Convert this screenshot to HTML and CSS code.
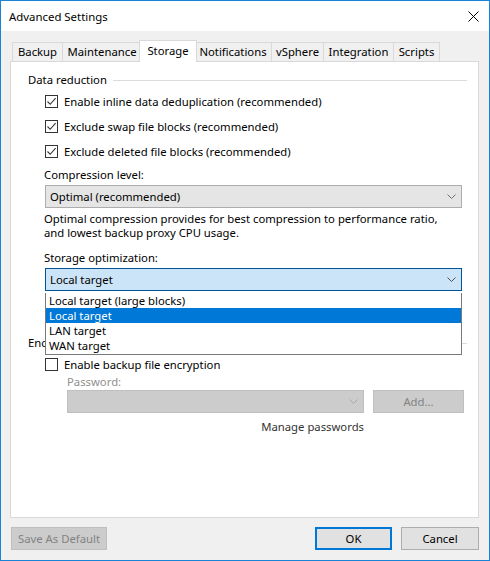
FILE: index.html
```html
<!DOCTYPE html>
<html>
<head>
<meta charset="utf-8">
<link rel="stylesheet" href="styles.css">
</head>
<body>
<div class="window">
  <div class="titlebar">
    <span class="title">Advanced Settings</span>
    <svg class="close" width="11" height="11" viewBox="0 0 11 11"><path d="M0.5 0.5L10.5 10.5M10.5 0.5L0.5 10.5" stroke="#000" stroke-width="1" fill="none"/></svg>
  </div>
  <div class="client">
    <div class="tabs">
      <div class="tab t-backup">Backup</div>
      <div class="tab t-maint">Maintenance</div>
      <div class="tab t-storage selected">Storage</div>
      <div class="tab t-notif">Notifications</div>
      <div class="tab t-vsphere">vSphere</div>
      <div class="tab t-integ">Integration</div>
      <div class="tab t-scripts">Scripts</div>
    </div>
    <div class="panel">
      <div class="group-head gh-data"><span>Data reduction</span><div class="rule"></div></div>
      <div class="checks">
        <div class="check"><span class="box"><svg width="11" height="11" viewBox="0 0 11 11"><path d="M1.5 5.5L4.2 8.3L9.6 2.2" stroke="#333" stroke-width="1.1" fill="none"/></svg></span>Enable inline data deduplication (recommended)</div>
        <div class="check"><span class="box"><svg width="11" height="11" viewBox="0 0 11 11"><path d="M1.5 5.5L4.2 8.3L9.6 2.2" stroke="#333" stroke-width="1.1" fill="none"/></svg></span>Exclude swap file blocks (recommended)</div>
        <div class="check"><span class="box"><svg width="11" height="11" viewBox="0 0 11 11"><path d="M1.5 5.5L4.2 8.3L9.6 2.2" stroke="#333" stroke-width="1.1" fill="none"/></svg></span>Exclude deleted file blocks (recommended)</div>
      </div>
      <div class="field-label fl-comp">Compression level:</div>
      <div class="combo">
        <span>Optimal (recommended)</span>
        <svg class="chev" width="9" height="5" viewBox="0 0 9 5"><path d="M0.5 0.5L4.5 4.5L8.5 0.5" stroke="#707070" stroke-width="1" fill="none"/></svg>
      </div>
      <p class="desc">Optimal compression provides for best compression to performance ratio,<br>and lowest backup proxy CPU usage.</p>
      <div class="field-label fl-stor">Storage optimization:</div>
      <div class="combo-wrap">
        <div class="combo focused">
          <span>Local target</span>
          <svg class="chev" width="9" height="5" viewBox="0 0 9 5"><path d="M0.5 0.5L4.5 4.5L8.5 0.5" stroke="#505050" stroke-width="1" fill="none"/></svg>
        </div>
        <ul class="dropdown">
          <li>Local target (large blocks)</li>
          <li class="hl">Local target</li>
          <li>LAN target</li>
          <li>WAN target</li>
        </ul>
      </div>
      <div class="group-head gh-enc"><span>Encryption</span><div class="rule"></div></div>
      <div class="check check-enc"><span class="box"></span>Enable backup file encryption</div>
      <div class="pw-label">Password:</div>
      <div class="pw-row">
        <div class="combo disabled pw-combo">
          <span></span>
          <svg class="chev" width="9" height="5" viewBox="0 0 9 5"><path d="M0.5 0.5L4.5 4.5L8.5 0.5" stroke="#a8a8a8" stroke-width="1" fill="none"/></svg>
        </div>
        <div class="btn disabled add-btn">Add...</div>
      </div>
      <div class="manage-row"><span class="manage">Manage passwords</span></div>
    </div>
    <div class="footer">
      <div class="btn disabled save-btn">Save As Default</div>
      <div class="spacer"></div>
      <div class="btn default ok-btn">OK</div>
      <div class="btn cancel-btn">Cancel</div>
    </div>
  </div>
</div>
</body>
</html>
```

FILE: styles.css
```css
* { box-sizing: border-box; }
html, body { margin: 0; padding: 0; }
body {
  font-family: "Noto Sans", "Open Sans", sans-serif;
  font-size: 11.3px;
  color: #000;
  background: #fff;
}
.window {
  width: 490px;
  height: 561px;
  border: 1px solid #1883d7;
  display: flex;
  flex-direction: column;
  background: #f0f0f0;
}
.titlebar {
  height: 30px;
  background: #fff;
  display: flex;
  align-items: center;
  padding-left: 8px;
  padding-right: 10px;
  flex: none;
}
.title {
  font-size: 11.4px;
  flex: 1;
  line-height: 16px;
  margin-top: 1px;
}
.close { margin-top: 1px; }
.client {
  flex: 1;
  padding: 9px 10px 0 9px;
  display: flex;
  flex-direction: column;
}
.tabs {
  display: flex;
  align-items: flex-end;
  height: 21px;
  position: relative;
  z-index: 2;
}
.tab {
  height: 19px;
  border: 1px solid #d9d9d9;
  border-bottom: none;
  margin-left: -1px;
  text-align: center;
  line-height: 18px;
  background: #f0f0f0;
  white-space: nowrap;
}
.t-backup { margin-left: 2px; width: 51px; }
.t-maint { width: 80px; }
.t-storage { width: 58px; margin-left: -3px; margin-right: -2px; }
.t-notif { width: 78px; }
.t-vsphere { width: 53px; }
.t-integ { width: 71px; }
.t-scripts { width: 47px; }
.tab.selected {
  height: 22px;
  margin-bottom: -1px;
  background: #fff;
  z-index: 3;
  line-height: 19px;
}
.panel {
  height: 457px;
  background: #fff;
  border: 1px solid #d9d9d9;
  padding: 0 11px 0 17px;
  position: relative;
  z-index: 1;
  flex: none;
}
.group-head {
  display: flex;
  align-items: center;
  height: 16px;
  line-height: 16px;
}
.group-head .rule {
  flex: 1;
  height: 1px;
  background: #dcdcdc;
  margin-left: 6px;
  margin-top: 1px;
}
.gh-data { margin-top: 10px; }
.checks { margin-top: 1px; }
.check {
  display: flex;
  align-items: center;
  height: 25px;
  margin-left: 16px;
}
.box {
  width: 13px;
  height: 13px;
  border: 1px solid #333;
  background: #fff;
  margin-right: 6px;
  margin-left: 1px;
  display: flex;
  align-items: center;
  justify-content: center;
  flex: none;
}
.box svg { display: block; }
.field-label {
  height: 16px;
  line-height: 16px;
  margin-left: 16px;
}
.fl-comp { margin-top: 3px; }
.combo {
  margin-left: 17px;
  margin-top: 2px;
  width: 417px;
  height: 23px;
  border: 1px solid #adadad;
  background: #e5e5e5;
  display: flex;
  align-items: center;
  padding-left: 4px;
  padding-right: 5px;
}
.combo span { flex: 1; line-height: 16px; }
.combo.focused {
  background: #cce4f7;
  border-color: #005499;
}
.desc {
  margin: 4px 0 0 16px;
  line-height: 14px;
}
.fl-stor { margin-top: 10px; }
.combo-wrap { position: relative; }
.dropdown {
  position: absolute;
  left: 17px;
  top: 25px;
  width: 417px;
  margin: 0;
  padding: 0;
  list-style: none;
  background: #fff;
  border: 1px solid #7a7a7a;
  border-top: none;
  z-index: 5;
}
.dropdown li {
  height: 15px;
  line-height: 15px;
  padding-left: 3px;
}
.dropdown li.hl {
  background: #0078d7;
  color: #fff;
}
.dropdown li:last-child { height: 16px; }
.gh-enc { margin-top: 44px; }
.check-enc { height: 16px; margin-top: 5px; }
.pw-label {
  margin-left: 39px;
  margin-top: 2px;
  height: 16px;
  line-height: 16px;
  color: #8f8f8f;
}
.pw-row {
  display: flex;
  gap: 9px;
  margin-left: 22px;
}
.pw-row .combo { margin-top: 0; width: 297px; }
.combo.disabled {
  background: #cccccc;
  border-color: #bfbfbf;
}
.btn {
  height: 23px;
  border: 1px solid #adadad;
  background: #e1e1e1;
  display: flex;
  align-items: center;
  justify-content: center;
  line-height: 16px;
}
.btn.disabled {
  background: #cccccc;
  border-color: #bfbfbf;
  color: #838383;
}
.add-btn { width: 91px; }
.manage-row {
  margin-top: 6px;
  width: 336px;
  text-align: right;
  height: 16px;
  line-height: 16px;
}
.manage { color: #333; }
.footer {
  display: flex;
  margin-top: 9px;
  gap: 9px;
}
.spacer { flex: 1; }
.save-btn { width: 96px; margin-left: 1px; }
.ok-btn {
  width: 77px;
  border: 2px solid #0078d7;
}
.cancel-btn { width: 78px; }
```
